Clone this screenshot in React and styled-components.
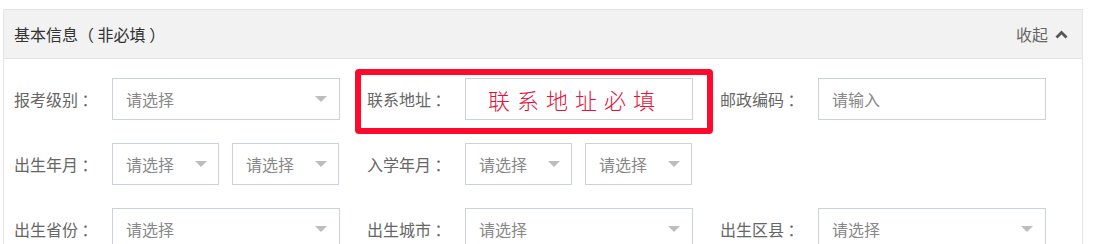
import React from 'react'
import styled, { createGlobalStyle } from 'styled-components'

const GlobalStyle = createGlobalStyle`
  body {
    margin: 0;
    background: #fff;
    font-family: "Noto Sans CJK SC", "Noto Sans", sans-serif;
  }
`

const Panel = styled.div`
  margin: 9px 0 0 3px;
  width: 1080px;
  border: 1px solid #e4e4e4;
  box-sizing: border-box;
`

const Header = styled.div`
  height: 48px;
  background: #f2f2f2;
  border-bottom: 1px solid #e4e4e4;
  padding: 0 14px 0 10px;
  display: flex;
  align-items: center;
  justify-content: space-between;
  font-size: 16px;
  color: #333;
`

const Toggle = styled.span`
  display: flex;
  align-items: center;
  gap: 7px;
  color: #666;
`

const Body = styled.div`
  padding: 19px 0 0 10px;
`

const Row = styled.div`
  display: flex;
  height: 42px;
  margin-bottom: 23px;
`

const Field = styled.div`
  position: relative;
  width: 353px;
  display: flex;
  align-items: center;
`

const Label = styled.span`
  width: 98px;
  flex-shrink: 0;
  font-size: 16px;
  color: #666;
  white-space: pre;
`

const Controls = styled.div`
  display: flex;
  gap: 13px;
`

const Box = styled.div`
  box-sizing: border-box;
  width: ${p => (p.$narrow ? '107px' : '228px')};
  height: 42px;
  border: 1px solid #ccd2dc;
  background: #fff;
  display: flex;
  align-items: center;
  justify-content: space-between;
  padding: 0 ${p => (p.$narrow ? '11px' : '12px')} 0 13px;
  font-size: 16px;
  color: #888;
`

const Caret = styled.span`
  width: 0;
  height: 0;
  border-left: 6.5px solid transparent;
  border-right: 6.5px solid transparent;
  border-top: 6px solid #bdbdbd;
`

const Note = styled.span`
  font-size: 22px;
  font-weight: 300;
  letter-spacing: 7px;
  color: #e8103a;
  padding-left: 9px;
`

const Highlight = styled.div`
  position: absolute;
  left: -12px;
  top: -9px;
  width: 358px;
  height: 65px;
  box-sizing: border-box;
  border: 6px solid #ff0a2c;
  border-radius: 4px;
  pointer-events: none;
`

const Select = ({ narrow }) => (
  <Box $narrow={narrow}>
    请选择
    <Caret />
  </Box>
)

const ChevronUp = () => (
  <svg width="13" height="9" viewBox="0 0 13 9">
    <polyline points="1.5,7.5 6.5,2.5 11.5,7.5" fill="none" stroke="#555" strokeWidth="2.8" />
  </svg>
)

export default function App() {
  return (
    <>
      <GlobalStyle />
      <Panel>
        <Header>
          基本信息（ 非必填 ）
          <Toggle>
            收起
            <ChevronUp />
          </Toggle>
        </Header>
        <Body>
          <Row>
            <Field>
              <Label>报考级别 ：</Label>
              <Select />
            </Field>
            <Field>
              <Label>联系地址 ：</Label>
              <Box>
                <Note>联系地址必填</Note>
              </Box>
              <Highlight />
            </Field>
            <Field>
              <Label>邮政编码 ：</Label>
              <Box>请输入</Box>
            </Field>
          </Row>
          <Row>
            <Field>
              <Label>出生年月 ：</Label>
              <Controls>
                <Select narrow />
                <Select narrow />
              </Controls>
            </Field>
            <Field>
              <Label>入学年月 ：</Label>
              <Controls>
                <Select narrow />
                <Select narrow />
              </Controls>
            </Field>
          </Row>
          <Row>
            <Field>
              <Label>出生省份 ：</Label>
              <Select />
            </Field>
            <Field>
              <Label>出生城市 ：</Label>
              <Select />
            </Field>
            <Field>
              <Label>出生区县 ：</Label>
              <Select />
            </Field>
          </Row>
        </Body>
      </Panel>
    </>
  )
}
